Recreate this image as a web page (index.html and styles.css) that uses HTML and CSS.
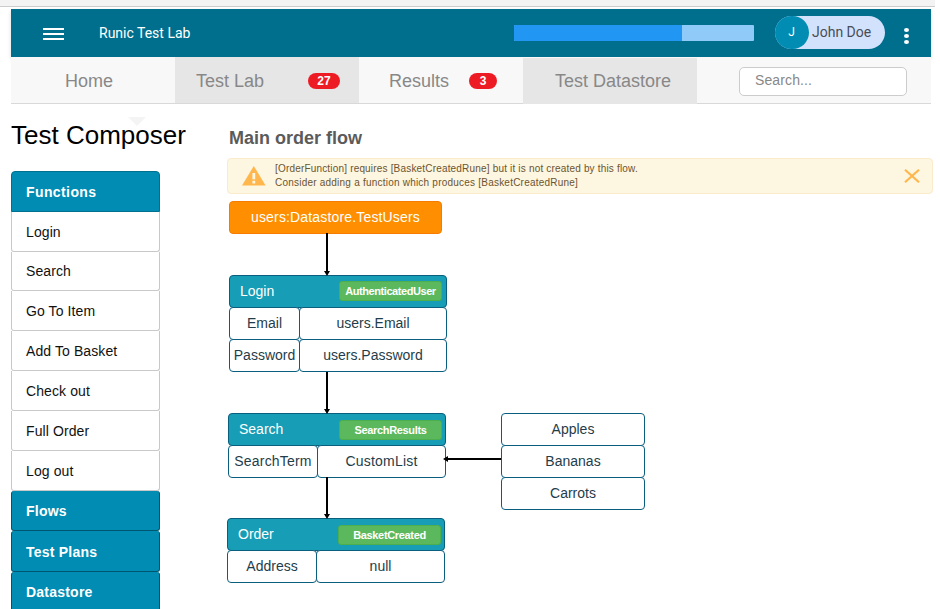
FILE: index.html
```html
<!DOCTYPE html>
<html lang="en">
<head>
<meta charset="utf-8">
<title>Runic Test Lab</title>
<link rel="stylesheet" href="styles.css">
</head>
<body>
<div class="top-strip"></div>
<div class="app">
  <header class="header">
    <div class="burger"><i></i><i></i><i></i></div>
    <div class="brand">Runic Test Lab</div>
    <div class="progress"><div class="progress-bar"></div></div>
    <div class="chip"><span class="avatar">J</span><span class="user">John Doe</span></div>
    <div class="dots"><i></i><i></i><i></i></div>
  </header>
  <nav class="nav">
    <a class="tab home">Home</a>
    <a class="tab lab dark">Test Lab<span class="count">27</span></a>
    <a class="tab results">Results<span class="count small">3</span></a>
    <a class="tab store dark">Test Datastore</a>
    <div class="search">Search...</div>
  </nav>
  <div class="body">
    <aside class="side">
      <h1 class="title"><span class="t">Test Composer</span><span class="caret"></span></h1>
      <ul class="menu">
        <li class="group first">Functions</li>
        <li class="item">Login</li>
        <li class="item short">Search</li>
        <li class="item">Go To Item</li>
        <li class="item">Add To Basket</li>
        <li class="item">Check out</li>
        <li class="item">Full Order</li>
        <li class="item">Log out</li>
        <li class="group">Flows</li>
        <li class="group tall">Test Plans</li>
        <li class="group">Datastore</li>
      </ul>
    </aside>
    <main class="main">
      <h2 class="flow-title">Main order flow</h2>
      <div class="alert">
        <svg class="warn" width="24" height="20" viewBox="0 0 24 20"><path d="M11.8 0 23.6 19.5H0z" fill="#ffb74d"/><path d="M10.4 7h2.8v6.2h-2.8zM10.4 14.8h2.8v2.6h-2.8z" fill="#fdf6e0"/></svg>
        <div class="alert-text"><p>[OrderFunction] requires [BasketCreatedRune] but it is not created by this flow.</p><p class="hint">Consider adding a function which produces [BasketCreatedRune]</p></div>
        <svg class="close" width="16" height="14" viewBox="0 0 16 14"><path d="M1 .8 15 13.2M15 .8 1 13.2" stroke="#ffb74d" stroke-width="2.2" fill="none"/></svg>
      </div>
      <div class="canvas">
        <div class="source">users:Datastore.TestUsers</div>
        <section class="node login">
          <div class="head"><span>Login</span><b class="badge">AuthenticatedUser</b></div>
          <div class="row"><div class="key">Email</div><div class="val">users.Email</div></div>
          <div class="row"><div class="key">Password</div><div class="val">users.Password</div></div>
        </section>
        <section class="node find">
          <div class="head"><span>Search</span><b class="badge">SearchResults</b></div>
          <div class="row"><div class="key">SearchTerm</div><div class="val">CustomList</div></div>
        </section>
        <section class="node order">
          <div class="head"><span>Order</span><b class="badge">BasketCreated</b></div>
          <div class="row"><div class="key">Address</div><div class="val">null</div></div>
        </section>
        <section class="node list">
          <div class="row"><div class="val">Apples</div></div>
          <div class="row"><div class="val">Bananas</div></div>
          <div class="row"><div class="val">Carrots</div></div>
        </section>
        <svg class="links" width="440" height="409" viewBox="0 0 440 409">
          <path d="M100 32v41M100 171v40M100 276v40M274 258h-55" stroke="#000" stroke-width="2" fill="none"/>
          <path d="M97 70h6l-3 5zM97 208h6l-3 5zM97 313h6l-3 5zM221 255v6l-5-3z"/>
        </svg>
      </div>
    </main>
  </div>
</div>
</body>
</html>
```
FILE: styles.css
```css
* { box-sizing: border-box; margin: 0; padding: 0; }
html, body { height: 609px; overflow: hidden; }
body { background: #fff; font-family: "Liberation Sans", Arial, sans-serif; font-size: 14px; color: #111; }
.top-strip { width: 935px; height: 7px; background: #f3f3f3; border-bottom: 1px solid #ccc; }
.app { margin: 2px 0 0 11px; width: 922px; }

.header { width: 920px; height: 48px; background: #006f8e; display: flex; align-items: flex-start; color: #fff; font-family: Roboto, sans-serif; box-shadow: 0 2px 4px rgba(0,0,0,.14); position: relative; }
.burger { margin: 19px 0 0 32px; width: 21px; display: grid; gap: 3px; }
.burger i { height: 2px; background: #fff; }
.brand { margin: 15px 0 0 35px; width: 380px; font-size: 14px; line-height: 18px; }
.progress { margin: 16px 0 0 35px; width: 240px; height: 16px; background: #90caf9; border-radius: 1px; overflow: hidden; }
.progress-bar { width: 168px; height: 16px; background: #2196f3; }
.chip { margin: 7px 0 0 21px; width: 110px; height: 33px; border-radius: 17px; background: #d3e2fc; display: flex; }
.avatar { width: 34px; height: 33px; border-radius: 17px; background: #008cb3; text-align: center; font-size: 12px; line-height: 32px; padding-right: 1px; }
.user { margin-left: 3px; font-size: 14px; line-height: 33px; color: #484d57; white-space: nowrap; }
.dots { margin: 19px 0 0 19px; display: grid; gap: 2px; }
.dots i { width: 5px; height: 4px; border-radius: 50%; background: #fff; }

.nav { width: 920px; height: 47px; background: #f8f8f8; border-bottom: 1px solid #d9d9d9; display: flex; position: relative; color: #888; font-size: 18px; }
.tab { height: 46px; line-height: 48px; display: flex; align-items: flex-start; white-space: nowrap; }
.dark { background: #e6e6e6; }
.home { width: 164px; padding-left: 54px; }
.lab { width: 184px; padding-left: 21px; }
.results { width: 164px; padding-left: 30px; }
.store { width: 174px; height: 46px; margin-top: 1px; padding-left: 32px; line-height: 46px; }
.count { width: 32px; height: 16px; margin: 16px 19px 0 auto; border-radius: 8px; background: #ed1c24; color: #fff; font: bold 12px/17px "Liberation Sans", Arial, sans-serif; text-align: center; }
.count.small { width: 28px; margin-right: 26px; }
.search { margin: 10px 0 0 42px; width: 168px; height: 29px; border: 1px solid #ccc; border-radius: 5px; background: #fff; padding-left: 15px; font-size: 14px; line-height: 25px; letter-spacing: .12px; }

.body { display: flex; }
.side { width: 149px; margin-right: 67px; }
.title { height: 67px; padding-top: 16px; font-size: 26px; font-weight: normal; line-height: 30px; white-space: nowrap; color: #000; position: relative; }
.caret { position: absolute; left: 117px; top: 13px; border: solid transparent; border-width: 9px 9px 0; border-top-color: #f4f4f4; }
.title .t { position: relative; z-index: 1; }
.menu { list-style: none; width: 149px; letter-spacing: .1px; }
.item { height: 40px; padding-left: 14px; line-height: 40px; border: 1px solid #c8c8c8; border-top: 0; border-radius: 0 0 3px 3px; }
.item.short { height: 39px; line-height: 39px; }
.group { height: 40px; padding-left: 14px; line-height: 41px; background: #008cb3; color: #fff; font-weight: bold; border: 1px solid #00566f; border-top-width: 0; border-radius: 3px; letter-spacing: .22px; }
.group.first { height: 41px; line-height: 41px; border: 1px solid #00718f; border-radius: 4px 4px 0 0; letter-spacing: .4px; }
.group.tall { height: 41px; line-height: 42px; }

.main { width: 706px; }
.flow-title { height: 54px; padding: 23px 0 0 2px; font-size: 18px; line-height: 22px; color: #5b5b5b; }
.alert { width: 706px; height: 36px; background: #fdf6e0; border: 1px solid #faebcc; border-radius: 4px; display: flex; }
.warn { margin: 7px 0 0 14px; }
.alert-text { margin: 3px 0 0 9px; width: 629px; font-size: 10px; line-height: 14px; letter-spacing: .18px; color: #6b5430; white-space: nowrap; }
.hint { letter-spacing: .22px; }
.close { margin-top: 10px; }

.canvas { position: relative; height: 409px; margin-top: 7px; color: #1f3d4a; }
.source { position: absolute; left: 2px; top: 0; width: 213px; height: 33px; background: #ff8f00; border: 1px solid #f57c00; border-radius: 4px; color: #fff; text-align: center; line-height: 31px; letter-spacing: .16px; }
.node { position: absolute; width: 218px; }
.login { left: 2px; top: 74px; }
.find { left: 1px; top: 212px; }
.order { left: 0; top: 317px; }
.list { left: 274px; top: 212px; width: 144px; }
.head { height: 33px; background: #179db5; border: 1px solid #0b5f7e; border-radius: 4px; display: flex; justify-content: space-between; padding: 0 4px 0 10px; line-height: 31px; color: #fff; }
.badge { width: 103px; height: 20px; margin-top: 6px; background: #5cb85c; border: 1px solid #4cae4c; border-radius: 3px; text-align: center; font-size: 11px; line-height: 19px; letter-spacing: -.33px; }
.find .badge, .order .badge { margin-right: -1px; }
.login .badge { margin-top: 5px; line-height: 18px; letter-spacing: -.44px; }
.row { display: flex; margin-top: -1px; }
.key, .val { height: 33px; border: 1px solid #0b5f7e; border-radius: 4px; text-align: center; line-height: 31px; background: #fff; }
.key { width: 71px; margin-right: -1px; }
.find .key, .order .key { width: 90px; }
.find .row { letter-spacing: .2px; }
.val { flex: 1; }
.list .row:first-child { margin-top: 0; }
.links { position: absolute; left: 0; top: 0; }
```
